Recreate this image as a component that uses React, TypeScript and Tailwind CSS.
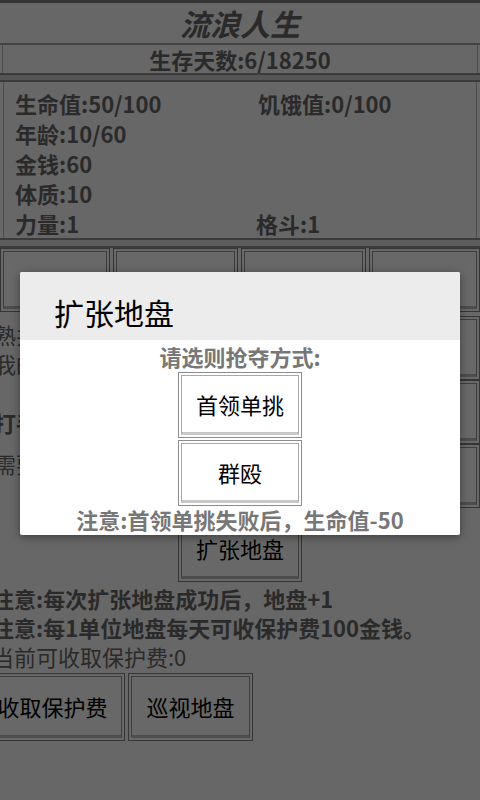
import React from 'react';

const font = { fontFamily: '"Noto Sans CJK SC", "Noto Sans", sans-serif' };

const Btn: React.FC<{ label?: string; className?: string; light?: boolean }> = ({ label, className = '', light }) => (
  <div className={`border ${light ? 'border-[#8c8c8c]' : 'border-[#6a6a6a]'} p-[2px] ${light ? 'bg-white' : 'bg-[#d0d0d0]'} ${className}`}>
    <div className={`h-full w-full border ${light ? 'border-[#a8a8a8] border-b-[3px] border-b-[#c8c8c8]' : 'border-[#7a7a7a] border-b-[3px] border-b-[#9a9a9a]'} flex items-center justify-center text-[22px] text-black whitespace-nowrap`}>
      {label}
    </div>
  </div>
);

export default function App() {
  return (
    <div style={font} className="relative w-[480px] h-[800px] overflow-hidden bg-[#cecece] text-[#555]">
      {/* header */}
      <div className="border-t-[3px] border-[#666] h-[43px] flex items-center justify-center">
        <span className="text-[30px] font-bold italic leading-none">流浪人生</span>
      </div>
      <div className="border-t-2 border-[#888]">
        <div className="mx-[2px] h-[28px] border-x border-[#999] flex items-center justify-center text-[22px] font-bold leading-none">
          生存天数:6/18250
        </div>
      </div>
      <div className="h-[9px] border-y-2 border-[#777] bg-[#aaa]" />

      {/* stats */}
      <div className="mx-[3px] h-[156px] border-x border-[#999] pl-[11px] pt-[6px] text-[22px] font-bold leading-[30px]">
        <div className="grid grid-cols-[243px_1fr]">
          <span>生命值:50/100</span>
          <span>饥饿值:0/100</span>
        </div>
        <div>年龄:10/60</div>
        <div>金钱:60</div>
        <div>体质:10</div>
        <div className="grid grid-cols-[241px_1fr]">
          <span>力量:1</span>
          <span>格斗:1</span>
        </div>
      </div>
      <div className="h-[10px] border-y-2 border-[#777] bg-[#bbb]" />

      {/* tabs row */}
      <div className="flex gap-[3px] h-[64px]">
        <Btn className="w-[110px]" />
        <Btn className="w-[125px]" />
        <Btn className="w-[125px]" />
        <Btn className="flex-1" />
      </div>

      {/* section under the dialog */}
      <div className="flex h-[204px] mt-[4px]">
        <div className="flex-1 -ml-[6px] text-[22px] leading-[29px] pt-[4px]">
          <div>熟共有打手</div>
          <div>我的地盘</div>
          <div className="mt-[30px] font-bold">打手工资</div>
          <div className="mt-[12px]">需要打手</div>
        </div>
        <div className="w-[124px] flex flex-col">
          <Btn label="招募" className="h-[64px]" />
          <Btn label="解雇" className="h-[64px]" />
          <Btn label="训练" className="h-[64px]" />
        </div>
      </div>

      {/* expand */}
      <div className="flex justify-center -mt-[4px]">
        <Btn label="扩张地盘" className="w-[124px] h-[66px]" />
      </div>
      <div className="-ml-[8px] pt-[2px] text-[22px] leading-[29px]">
        <div className="font-bold">注意:每次扩张地盘成功后，地盘+1</div>
        <div className="font-bold">注意:每1单位地盘每天可收保护费100金钱。</div>
        <div>当前可收取保护费:0</div>
      </div>
      <div className="flex gap-[3px] -ml-[20px] mt-[2px]">
        <Btn label="收取保护费" className="w-[145px] h-[68px]" />
        <Btn label="巡视地盘" className="w-[125px] h-[68px]" />
      </div>

      {/* overlay */}
      <div className="absolute inset-0 bg-black/50" />

      {/* dialog */}
      <div className="absolute left-[20px] top-[272px] w-[440px] h-[263px] rounded-[2px] bg-white shadow-[0_2px_8px_rgba(0,0,0,0.4)] overflow-hidden">
        <div className="h-[68px] bg-[#ececec] pl-[34px] pt-[25px] text-[30px] leading-none text-black">扩张地盘</div>
        <div className="flex flex-col items-center">
          <div className="text-[22px] font-bold text-[#777] leading-[30px] mt-[1px]">请选则抢夺方式:</div>
          <Btn light label="首领单挑" className="w-[124px] h-[66px] mt-[1px]" />
          <Btn light label="群殴" className="w-[124px] h-[66px] mt-[2px]" />
          <div className="text-[22px] font-bold text-[#777] leading-[30px] -mt-[2px]">注意:首领单挑失败后，生命值-50</div>
        </div>
      </div>
    </div>
  );
}
